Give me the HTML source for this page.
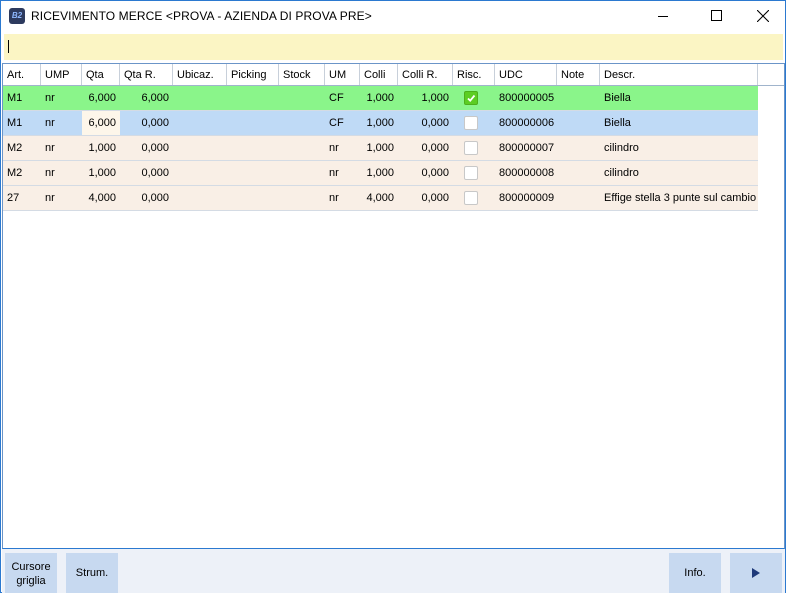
<!DOCTYPE html><html><head><style>
*{margin:0;padding:0;box-sizing:border-box}
body{width:786px;height:593px;overflow:hidden;background:#fff;font-family:"Liberation Sans",sans-serif;font-size:11px;color:#000;position:relative;border:1px solid #2b79d0}
.abs{position:absolute}
.title{left:0;top:0;width:784px;height:31px;background:#fff}
.title .t{left:30px;top:8px;font-size:12px;font-family:"Liberation Sans",sans-serif;letter-spacing:0.1px}
.logo{left:8px;top:7px;width:16px;height:16px;background:#2d3a5e;border-radius:3px;color:#8fb8ff;font-size:8px;font-style:italic;font-weight:bold;text-align:center;line-height:16px}
.input{left:3px;top:33px;width:779px;height:26px;background:#fbf5c4}
.input i{position:absolute;left:4px;top:6px;width:1px;height:13px;background:#000}
.grid{left:1px;top:62px;width:783px;height:486px;border:1px solid #6b95c8;border-bottom:1px solid #2b79d0;background:#fff}
.hdr{left:0;top:0;height:22px;width:781px;border-bottom:1px solid #a0b4cc;background:#fff}
.c{position:absolute;top:0;height:100%;padding-left:4px;line-height:22px;border-right:1px solid #c8d0da;white-space:nowrap}
.row{left:0;width:755px;height:25px;border-bottom:1px solid #d4dbe4}
.row .c{border-right:none;line-height:24px}
.r{text-align:right;padding-right:4px}
.cb{position:absolute;left:461px;top:5px;width:14px;height:14px;background:#fff;border:1px solid #c8c8c8;border-radius:2px}
.cb.on{background:#5ccd22;border-color:#4cb01a}
.bar{left:1px;top:548px;width:783px;height:44px;background:#edf1f8}
.btn{position:absolute;top:4px;height:40px;background:#c7d9f0;text-align:center;font-size:11px;font-family:"Liberation Sans",sans-serif}
</style></head><body>
<div class="abs title"><div class="abs logo">B2</div><div class="abs t">RICEVIMENTO MERCE &lt;PROVA - AZIENDA DI PROVA PRE&gt;</div>
<div class="abs" style="left:657px;top:15px;width:10px;height:1px;background:#000"></div>
<div class="abs" style="left:710px;top:9px;width:11px;height:11px;border:1px solid #000"></div>
<svg class="abs" style="left:756px;top:9px" width="12" height="12"><path d="M0 0L12 12M12 0L0 12" stroke="#000" stroke-width="1.1"/></svg>
</div>
<div class="abs input"><i></i></div>
<div class="abs grid">
<div class="abs hdr">
<div class="c" style="left:0;width:38px">Art.</div><div class="c" style="left:38px;width:41px">UMP</div><div class="c" style="left:79px;width:38px">Qta</div><div class="c" style="left:117px;width:53px">Qta R.</div><div class="c" style="left:170px;width:54px">Ubicaz.</div><div class="c" style="left:224px;width:52px">Picking</div><div class="c" style="left:276px;width:46px">Stock</div><div class="c" style="left:322px;width:35px">UM</div><div class="c" style="left:357px;width:38px">Colli</div><div class="c" style="left:395px;width:55px">Colli R.</div><div class="c" style="left:450px;width:42px">Risc.</div><div class="c" style="left:492px;width:62px">UDC</div><div class="c" style="left:554px;width:43px">Note</div><div class="c" style="left:597px;width:158px">Descr.</div>
</div>
<div class="abs row" style="top:22px;background:#8af58a"><div class="c" style="left:0">M1</div><div class="c" style="left:38px">nr</div><div class="c r" style="left:79px;width:38px">6,000</div><div class="c r" style="left:117px;width:53px">6,000</div><div class="c" style="left:322px">CF</div><div class="c r" style="left:357px;width:38px">1,000</div><div class="c r" style="left:395px;width:55px">1,000</div><div class="cb on"><svg width="12" height="12" style="display:block"><path d="M3 6.5L5.2 8.7L9.5 3.5" stroke="#fff" stroke-width="1.8" fill="none"/></svg></div><div class="c" style="left:492px">800000005</div><div class="c" style="left:597px">Biella</div></div>
<div class="abs row" style="top:47px;background:#bfdaf6"><div class="c" style="left:0">M1</div><div class="c" style="left:38px">nr</div><div class="c r" style="left:79px;width:38px;background:#fdf6ea">6,000</div><div class="c r" style="left:117px;width:53px">0,000</div><div class="c" style="left:322px">CF</div><div class="c r" style="left:357px;width:38px">1,000</div><div class="c r" style="left:395px;width:55px">0,000</div><div class="cb"></div><div class="c" style="left:492px">800000006</div><div class="c" style="left:597px">Biella</div></div>
<div class="abs row" style="top:72px;background:#f9efe6"><div class="c" style="left:0">M2</div><div class="c" style="left:38px">nr</div><div class="c r" style="left:79px;width:38px">1,000</div><div class="c r" style="left:117px;width:53px">0,000</div><div class="c" style="left:322px">nr</div><div class="c r" style="left:357px;width:38px">1,000</div><div class="c r" style="left:395px;width:55px">0,000</div><div class="cb"></div><div class="c" style="left:492px">800000007</div><div class="c" style="left:597px">cilindro</div></div>
<div class="abs row" style="top:97px;background:#f9efe6"><div class="c" style="left:0">M2</div><div class="c" style="left:38px">nr</div><div class="c r" style="left:79px;width:38px">1,000</div><div class="c r" style="left:117px;width:53px">0,000</div><div class="c" style="left:322px">nr</div><div class="c r" style="left:357px;width:38px">1,000</div><div class="c r" style="left:395px;width:55px">0,000</div><div class="cb"></div><div class="c" style="left:492px">800000008</div><div class="c" style="left:597px">cilindro</div></div>
<div class="abs row" style="top:122px;background:#f9efe6"><div class="c" style="left:0">27</div><div class="c" style="left:38px">nr</div><div class="c r" style="left:79px;width:38px">4,000</div><div class="c r" style="left:117px;width:53px">0,000</div><div class="c" style="left:322px">nr</div><div class="c r" style="left:357px;width:38px">4,000</div><div class="c r" style="left:395px;width:55px">0,000</div><div class="cb"></div><div class="c" style="left:492px">800000009</div><div class="c" style="left:597px">Effige stella 3 punte sul cambio</div></div>
</div>
<div class="abs bar">
<div class="btn" style="left:3px;width:52px;padding-top:7px;line-height:14px">Cursore<br>griglia</div>
<div class="btn" style="left:64px;width:52px;line-height:40px">Strum.</div>
<div class="btn" style="left:667px;width:52px;line-height:40px">Info.</div>
<div class="btn" style="left:728px;width:52px"><svg style="margin-top:15px" width="8" height="10"><path d="M0 0L8 5L0 10Z" fill="#1f3a7a"/></svg></div>
</div>
</body></html>
